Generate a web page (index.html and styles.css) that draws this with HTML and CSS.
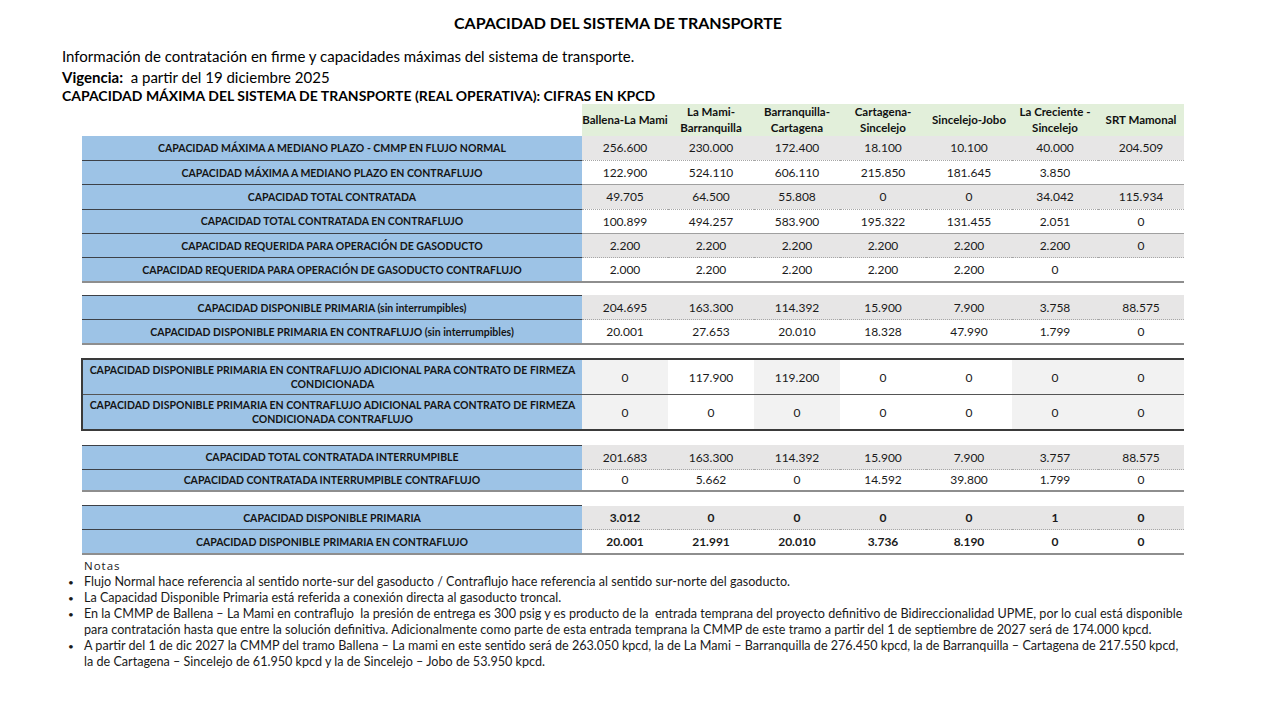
FILE: index.html
```html
<!DOCTYPE html>
<html lang="es">
<head>
<meta charset="utf-8">
<title>Capacidad del sistema de transporte</title>
<link rel="stylesheet" href="styles.css">
</head>
<body>
<main class="page">
  <h1 class="title">CAPACIDAD DEL SISTEMA DE TRANSPORTE</h1>
  <p class="intro">Información de contratación en firme y capacidades máximas del sistema de transporte.</p>
  <p class="intro"><b>Vigencia:</b>&nbsp; a partir del 19 diciembre 2025</p>
  <p class="caption">CAPACIDAD MÁXIMA DEL SISTEMA DE TRANSPORTE (REAL OPERATIVA): CIFRAS EN KPCD</p>

  <table class="cap">
    <colgroup><col class="c-label"><col class="c-num"><col class="c-num"><col class="c-num"><col class="c-num"><col class="c-num"><col class="c-num"><col class="c-num"></colgroup>
    <thead>
      <tr class="head">
        <th class="blank"></th>
        <th>Ballena-La Mami</th>
        <th>La Mami-<br>Barranquilla</th>
        <th>Barranquilla-<br>Cartagena</th>
        <th>Cartagena-<br>Sincelejo</th>
        <th>Sincelejo-Jobo</th>
        <th>La Creciente -<br>Sincelejo</th>
        <th>SRT Mamonal</th>
      </tr>
    </thead>

    <tbody class="grp g1">
      <tr class="odd"><th class="lab">CAPACIDAD MÁXIMA A MEDIANO PLAZO - CMMP EN FLUJO NORMAL</th><td>256.600</td><td>230.000</td><td>172.400</td><td>18.100</td><td>10.100</td><td>40.000</td><td>204.509</td></tr>
      <tr class="even"><th class="lab">CAPACIDAD MÁXIMA A MEDIANO PLAZO EN CONTRAFLUJO</th><td>122.900</td><td>524.110</td><td>606.110</td><td>215.850</td><td>181.645</td><td>3.850</td><td></td></tr>
      <tr class="odd"><th class="lab">CAPACIDAD TOTAL CONTRATADA</th><td>49.705</td><td>64.500</td><td>55.808</td><td>0</td><td>0</td><td>34.042</td><td>115.934</td></tr>
      <tr class="even"><th class="lab">CAPACIDAD TOTAL CONTRATADA EN CONTRAFLUJO</th><td>100.899</td><td>494.257</td><td>583.900</td><td>195.322</td><td>131.455</td><td>2.051</td><td>0</td></tr>
      <tr class="odd"><th class="lab">CAPACIDAD REQUERIDA PARA OPERACIÓN DE GASODUCTO</th><td>2.200</td><td>2.200</td><td>2.200</td><td>2.200</td><td>2.200</td><td>2.200</td><td>0</td></tr>
      <tr class="even last"><th class="lab">CAPACIDAD REQUERIDA PARA OPERACIÓN DE GASODUCTO CONTRAFLUJO</th><td>2.000</td><td>2.200</td><td>2.200</td><td>2.200</td><td>2.200</td><td>0</td><td></td></tr>
    </tbody>

    <tbody class="gap gap-s"><tr><td colspan="8"></td></tr></tbody>

    <tbody class="grp g2">
      <tr class="odd"><th class="lab">CAPACIDAD DISPONIBLE PRIMARIA (sin interrumpibles)</th><td>204.695</td><td>163.300</td><td>114.392</td><td>15.900</td><td>7.900</td><td>3.758</td><td>88.575</td></tr>
      <tr class="even last"><th class="lab">CAPACIDAD DISPONIBLE PRIMARIA EN CONTRAFLUJO (sin interrumpibles)</th><td>20.001</td><td>27.653</td><td>20.010</td><td>18.328</td><td>47.990</td><td>1.799</td><td>0</td></tr>
    </tbody>

    <tbody class="gap"><tr><td colspan="8"></td></tr></tbody>

    <tbody class="grp g3">
      <tr class="firm"><th class="lab">CAPACIDAD DISPONIBLE PRIMARIA EN CONTRAFLUJO ADICIONAL PARA CONTRATO DE FIRMEZA CONDICIONADA</th><td class="sh">0</td><td>117.900</td><td class="sh">119.200</td><td>0</td><td>0</td><td class="sh">0</td><td class="sh">0</td></tr>
      <tr class="firm"><th class="lab">CAPACIDAD DISPONIBLE PRIMARIA EN CONTRAFLUJO ADICIONAL PARA CONTRATO DE FIRMEZA CONDICIONADA CONTRAFLUJO</th><td class="sh">0</td><td>0</td><td class="sh">0</td><td>0</td><td>0</td><td class="sh">0</td><td class="sh">0</td></tr>
    </tbody>

    <tbody class="gap"><tr><td colspan="8"></td></tr></tbody>

    <tbody class="grp g4">
      <tr class="odd"><th class="lab">CAPACIDAD TOTAL CONTRATADA INTERRUMPIBLE</th><td>201.683</td><td>163.300</td><td>114.392</td><td>15.900</td><td>7.900</td><td>3.757</td><td>88.575</td></tr>
      <tr class="even last short"><th class="lab">CAPACIDAD CONTRATADA INTERRUMPIBLE CONTRAFLUJO</th><td>0</td><td>5.662</td><td>0</td><td>14.592</td><td>39.800</td><td>1.799</td><td>0</td></tr>
    </tbody>

    <tbody class="gap"><tr><td colspan="8"></td></tr></tbody>

    <tbody class="grp g5">
      <tr class="odd"><th class="lab">CAPACIDAD DISPONIBLE PRIMARIA</th><td>3.012</td><td>0</td><td>0</td><td>0</td><td>0</td><td>1</td><td>0</td></tr>
      <tr class="even last"><th class="lab">CAPACIDAD DISPONIBLE PRIMARIA EN CONTRAFLUJO</th><td>20.001</td><td>21.991</td><td>20.010</td><td>3.736</td><td>8.190</td><td>0</td><td>0</td></tr>
    </tbody>
  </table>

  <section class="notes">
    <p class="notes-title">Notas</p>
    <ul class="notes-list">
      <li>Flujo Normal hace referencia al sentido norte-sur del gasoducto / Contraflujo hace referencia al sentido sur-norte del gasoducto.</li>
      <li>La Capacidad Disponible Primaria está referida a conexión directa al gasoducto troncal.</li>
      <li>En la CMMP de Ballena – La Mami en contraflujo&nbsp; la presión de entrega es 300 psig y es producto de la&nbsp; entrada temprana del proyecto definitivo de Bidireccionalidad UPME, por lo cual está disponible<br>para contratación hasta que entre la solución definitiva. Adicionalmente como parte de esta entrada temprana la CMMP de este tramo a partir del 1 de septiembre de 2027 será de 174.000 kpcd.</li>
      <li>A partir del 1 de dic 2027 la CMMP del tramo Ballena – La mami en este sentido será de 263.050 kpcd, la de La Mami – Barranquilla de 276.450 kpcd, la de Barranquilla – Cartagena de 217.550 kpcd,<br>la de Cartagena – Sincelejo de 61.950 kpcd y la de Sincelejo – Jobo de 53.950 kpcd.</li>
    </ul>
  </section>
</main>
</body>
</html>
```

FILE: styles.css
```css
* { box-sizing: border-box; }

html, body {
  margin: 0;
  background: #ffffff;
}

body {
  font-family: Lato, "Liberation Sans", sans-serif;
  color: #000000;
}

.page {
  width: 1280px;
  height: 720px;
  padding: 13px 0 0 62px;
  overflow: hidden;
}

.title {
  margin: 0 0 13px;
  width: 1112px;
  text-align: center;
  font-size: 16px;
  line-height: 20px;
  font-weight: 700;
}

.intro {
  margin: 0;
  font-size: 15px;
  line-height: 21px;
}

.caption {
  margin: 0;
  font-size: 14px;
  line-height: 16px;
  font-weight: 700;
}

/* table */
.cap {
  margin-left: 19px;
  border-collapse: collapse;
  table-layout: fixed;
  width: 1102px;
}

.c-label { width: 500px; }
.c-num { width: 86px; }

.cap th,
.cap td {
  padding: 0;
  text-align: center;
  vertical-align: middle;
}

.head th {
  height: 32px;
  background: #e2efda;
  font-size: 11.5px;
  line-height: 16px;
  font-weight: 700;
  color: #111111;
}

.head th.blank { background: #ffffff; }

.cap .lab {
  background: #9dc3e6;
  font-size: 10.5px;
  line-height: 14px;
  font-weight: 700;
  color: #151515;
  padding: 0 4px;
  border-bottom: 1px solid #3d4147;
}

.grp td {
  font-size: 12px;
  color: #1a1a1a;
}

.grp tr { height: 24.4px; }

.odd td {
  background: #e7e6e6;
  border-bottom: 1px dotted #a6a6a6;
}

.even td {
  background: #ffffff;
  border-bottom: 1px solid #a0a0a0;
}

.grp tr.last td,
.grp tr.last .lab {
  border-bottom: 2px solid #8e8e8e;
}

.g2 tr:first-child .lab,
.g4 tr:first-child .lab,
.g5 tr:first-child .lab {
  border-top: 1px solid #3d4147;
}

.g4 tr.short { height: 21px; }

/* firmeza condicionada block */
.g3 tr { height: 35.5px; }

.g3 td {
  background: #ffffff;
  font-size: 12px;
  color: #1a1a1a;
}

.g3 td.sh { background: #f2f2f2; }

.g3 tr:first-child th,
.g3 tr:first-child td {
  border-top: 2px solid #3a3a3a;
  border-bottom: 1px solid #555555;
}

.g3 tr:last-child th,
.g3 tr:last-child td {
  border-bottom: 2px solid #3a3a3a;
}

.g3 .lab { border-left: 2px solid #3a3a3a; }

.g5 td { font-weight: 700; }

.gap td {
  height: 15px;
  background: #ffffff;
}

.gap-s td { height: 13px; }

/* notes */
.notes {
  margin-top: 3px;
  font-size: 12.6px;
  line-height: 16px;
  color: #1a1a1a;
}

.notes-title {
  margin: 0 0 0 22px;
  font-family: "Open Sans", "Noto Sans", sans-serif;
  font-size: 11.5px;
  line-height: 16px;
  letter-spacing: 1px;
}

.notes-list {
  margin: 0;
  padding: 0 0 0 6px;
  list-style: none;
}

.notes-list li {
  display: flex;
  line-height: 16px;
}

.notes-list li::before {
  content: "•";
  flex: 0 0 16px;
  font-size: 10px;
}
```
